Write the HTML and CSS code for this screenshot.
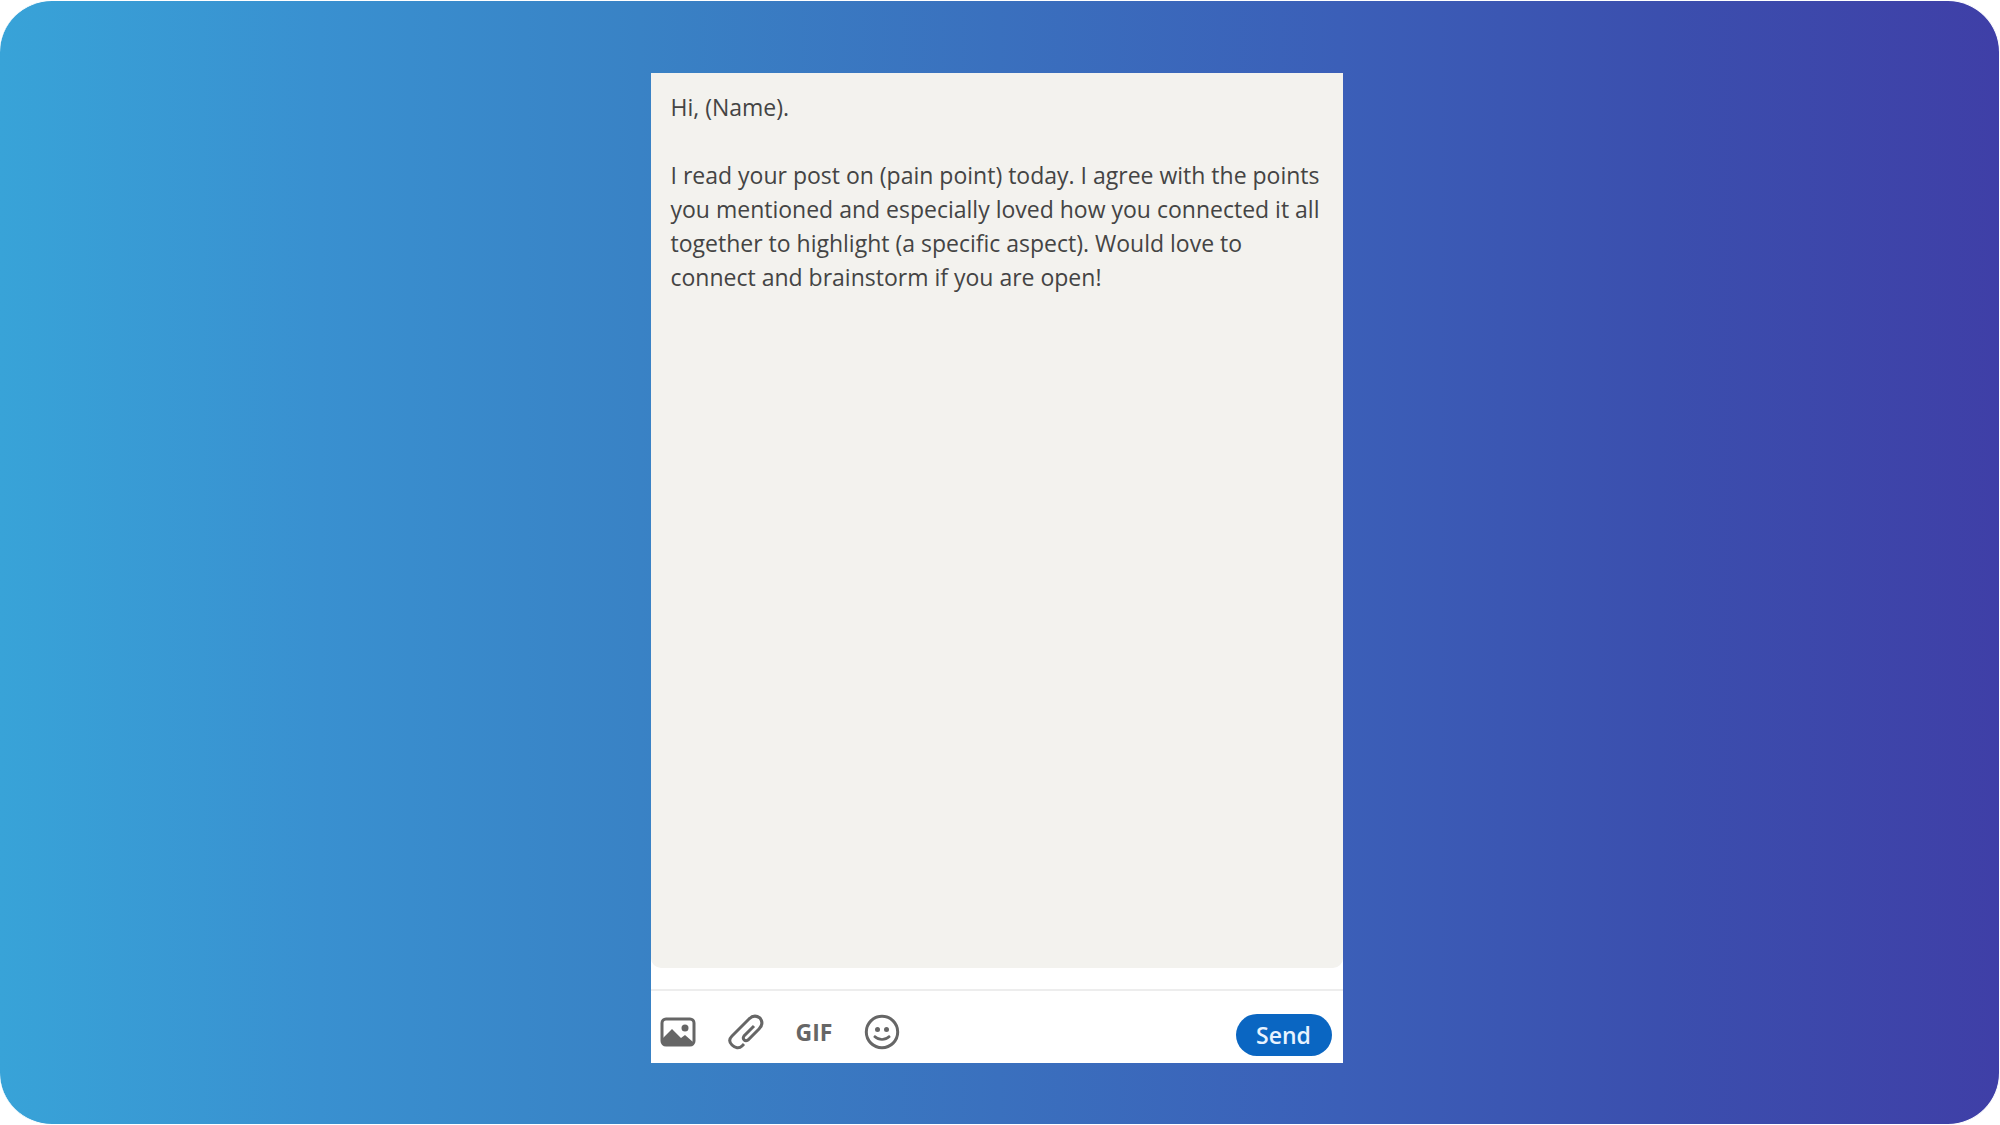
FILE: index.html
```html
<!DOCTYPE html>
<html lang="en">
<head>
    <meta charset="UTF-8">
    <meta name="viewport" content="width=device-width, initial-scale=1.0">
    <title>New message</title>
    <link rel="stylesheet" href="styles.css">
</head>
<body>
    <main class="stage">
        <form class="composer">
            <textarea class="message" aria-label="Message">Hi, (Name).

I read your post on (pain point) today. I agree with the points you mentioned and especially loved how you connected it all together to highlight (a specific aspect). Would love to connect and brainstorm if you are open!</textarea>
            <div class="toolbar">
                <div class="tools">
                    <button type="button" class="tool" aria-label="Attach an image">
                        <svg viewBox="0 0 36 36">
                            <rect x="2" y="5" width="32" height="26" rx="4" fill="none" stroke="currentColor" stroke-width="3"/>
                            <circle cx="25" cy="14" r="3.5" fill="currentColor"/>
                            <path d="M3 24 L12 15 L21 24 L25 21 L33 28 V31 H3 Z" fill="currentColor"/>
                        </svg>
                    </button>
                    <button type="button" class="tool" aria-label="Attach a file">
                        <svg viewBox="0 0 36 36" fill="none" stroke="currentColor" stroke-width="3">
                            <path d="M16 30 L14 32 C11 35 7 34 4 31 C1 28 1 25 4 22 L21 5 C24 2 28 1 32 4 C35 8 34 12 31 15 L20 26 C17 28 14 25 16 22 L26 12"/>
                        </svg>
                    </button>
                    <button type="button" class="tool gif">GIF</button>
                    <button type="button" class="tool" aria-label="Add an emoji">
                        <svg viewBox="0 0 36 36">
                            <circle cx="18" cy="18" r="15.7" fill="none" stroke="currentColor" stroke-width="3"/>
                            <circle cx="13.5" cy="15.5" r="2.5" fill="currentColor"/>
                            <circle cx="22.5" cy="15.5" r="2.5" fill="currentColor"/>
                            <path d="M10 22 Q18 29 26 22" fill="none" stroke="currentColor" stroke-width="2.5"/>
                        </svg>
                    </button>
                </div>
                <button type="submit" class="send">Send</button>
            </div>
        </form>
    </main>
</body>
</html>
```

FILE: styles.css
```css
* {
    box-sizing: border-box;
}
body {
    margin: 0;
    background: #fff;
    font-family: "Open Sans", "Noto Sans", sans-serif;
}
.stage {
    display: flex;
    justify-content: center;
    min-height: 100vh;
    padding: 72px 24px 61px 18px;
    border: solid #fff;
    border-width: 1px 1px 1px 0;
    border-radius: 52px;
    background: linear-gradient(to right, #38a3d8 0%, #3990d0 16%, #3982c5 32%, #3a70be 50%, #3b5fb8 67%, #3b4fae 83%, #3f3fa7 100%);
}
.composer {
    display: flex;
    flex-direction: column;
    width: 692px;
    max-width: 100%;
    background: #fff;
}
.message {
    flex: 1;
    width: 100%;
    margin-bottom: 21px;
    padding: 17px 12px 17px 20px;
    border: none;
    border-radius: 0 0 10px 10px;
    outline: none;
    resize: none;
    overflow: hidden;
    background: #f3f2ee;
    color: #444;
    font-family: inherit;
    font-size: 23px;
    line-height: 34px;
}
.toolbar {
    display: flex;
    justify-content: space-between;
    align-items: flex-start;
    padding: 23px 11px 7px 9px;
    border-top: 2px solid #ededed;
}
.tools {
    display: flex;
    gap: 32px;
}
.tool {
    width: 36px;
    height: 36px;
    padding: 0;
    border: none;
    background: none;
    color: #666;
    cursor: pointer;
}
.tool svg {
    display: block;
    width: 36px;
    height: 36px;
}
.gif {
    font-family: inherit;
    font-size: 23px;
    font-weight: 700;
    line-height: 36px;
}
.send {
    width: 96px;
    height: 42px;
    padding: 0;
    border: none;
    border-radius: 21px;
    background: #0a66c2;
    color: #e8f3ff;
    font-family: inherit;
    font-size: 23px;
    font-weight: 600;
    line-height: 42px;
    cursor: pointer;
}
```
